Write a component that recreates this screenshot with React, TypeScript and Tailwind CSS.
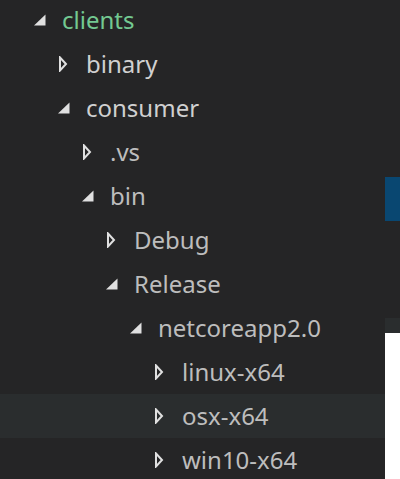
import React from "react";

type Node = { name: string; level: number; open: boolean; color?: string; hover?: boolean };

const nodes: Node[] = [
  { name: "clients", level: 0, open: true, color: "text-[#73c991]" },
  { name: "binary", level: 1, open: false, color: "text-[#d0d0d0]" },
  { name: "consumer", level: 1, open: true, color: "text-[#d0d0d0]" },
  { name: ".vs", level: 2, open: false },
  { name: "bin", level: 2, open: true },
  { name: "Debug", level: 3, open: false },
  { name: "Release", level: 3, open: true },
  { name: "netcoreapp2.0", level: 4, open: true },
  { name: "linux-x64", level: 5, open: false },
  { name: "osx-x64", level: 5, open: false, hover: true },
  { name: "win10-x64", level: 5, open: false },
];

function Twisty({ open }: { open: boolean }) {
  if (open) {
    return (
      <svg width="16" height="16" viewBox="0 0 16 16" className="shrink-0">
        <path d="M14.5 2.5 L14.5 13.5 L3 13.5 Z" fill="#e0e0e0" />
      </svg>
    );
  }
  return (
    <svg width="16" height="16" viewBox="0 0 16 16" className="shrink-0">
      <path d="M5 1.5 L11 8 L5 14.5 Z" fill="none" stroke="#e0e0e0" strokeWidth="2" strokeLinejoin="miter" />
    </svg>
  );
}

export default function App() {
  return (
    <div className="flex h-[479px] w-[400px] overflow-hidden bg-white" style={{ fontFamily: '"Noto Sans", "Open Sans", sans-serif' }}>
      <div className="w-[385px] bg-[#252526]">
        <div className="-mt-[2px] flex flex-col">
          {nodes.map((n) => (
            <div
              key={n.name}
              className={`flex h-[44px] items-center ${n.hover ? "bg-[#2a2d2e]" : ""}`}
              style={{ paddingLeft: 31 + 24 * n.level }}
            >
              <Twisty open={n.open} />
              <span className={`ml-[15px] text-[24px] leading-none ${n.color ?? "text-[#bdbdbd]"}`}>{n.name}</span>
            </div>
          ))}
        </div>
      </div>
      <div className="flex w-[15px] flex-col">
        <div className="h-[177px] bg-[#252526]" />
        <div className="h-[44px] bg-[#094771]" />
        <div className="h-[97px] bg-[#252526]" />
        <div className="h-[15px] bg-[#2a2d2e]" />
        <div className="flex-1 bg-white" />
      </div>
    </div>
  );
}
